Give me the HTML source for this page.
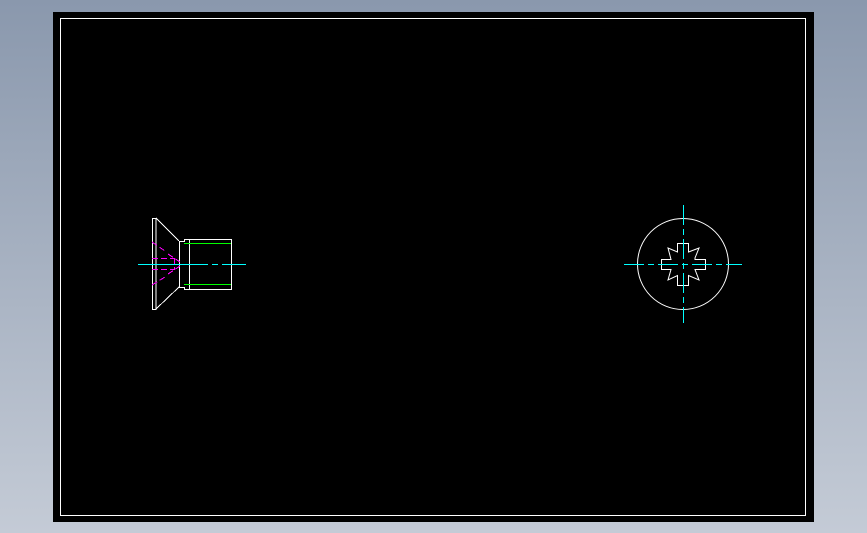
<!DOCTYPE html><html><head><style>body{margin:0;width:867px;height:533px;overflow:hidden;background:linear-gradient(#8a98ad,#c4cbd6);}</style></head><body>
<svg width="867" height="533" style="position:absolute;left:0;top:0" shape-rendering="crispEdges">
<rect x="53" y="12" width="761" height="510" fill="#000"/>
<rect x="60.5" y="18.5" width="745" height="497" fill="none" stroke="#fff"/>
<g fill="none" stroke="#fff" stroke-width="1">
<rect x="152.5" y="218.5" width="3.5" height="91"/>
<path d="M156 218L179 241M156 309L179 287M179.5 241V288M179 241.5H184.5V239.5H189M179 287.5H184.5V289.5H189"/>
<rect x="189.5" y="239.5" width="42" height="50"/>
</g>
<path d="M184 243.5H231M184 284.5H231" stroke="#0f0"/>
<path d="M152 242L165 251M168 254L180 262M152 285L165 277M168 274L180 266M152 258.5H174M152 269.5H174M174.5 258V270" stroke="#f0f" fill="none" stroke-dasharray="6 3"/>
<path d="M138 264.5H246" stroke="#0ff" stroke-dasharray="70 4 6 4"/>
<circle cx="683" cy="264" r="45.5" fill="none" stroke="#fff" shape-rendering="auto"/>
<path d="M677.5 243.5H688.5V252L699 248L695 258V259.5H705.5V269.5H695L699 280L688.5 275.5V285.5H677.5V275.5L668 280L671 269.5H661.5V259.5H671L668 248L677.5 252Z" fill="none" stroke="#fff" shape-rendering="auto"/>
<path d="M624 264.5H742M683.5 205V323" stroke="#0ff" stroke-dasharray="20 4 6 4"/>
</svg></body></html>
